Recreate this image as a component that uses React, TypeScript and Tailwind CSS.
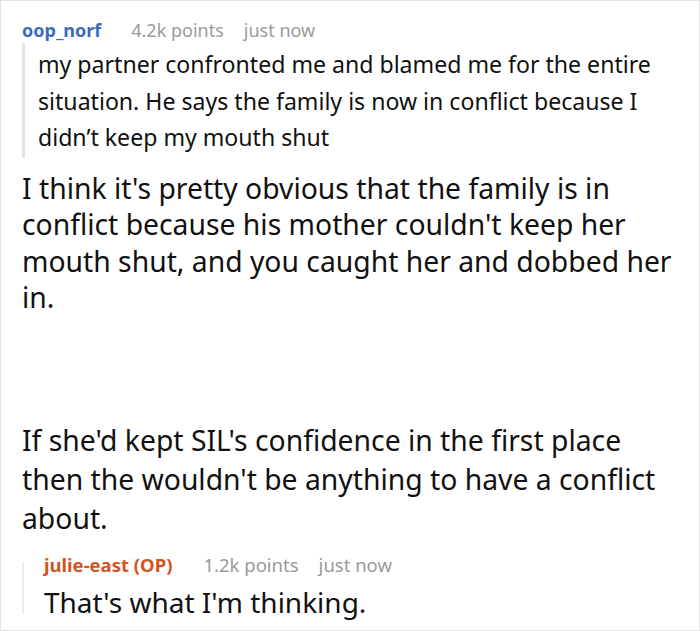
export default function App() {
  return (
    <div
      className="w-[700px] h-[631px] bg-white border border-[#e2e2e2] overflow-hidden text-[#111]"
      style={{ fontFamily: '"Noto Sans", sans-serif' }}
    >
      <div className="pl-[21px] pr-[19px] pt-[17px]">
        <div className="flex items-center text-[18px] leading-[24px]">
          <span className="font-bold text-[#3a6bbf]">oop_norf</span>
          <span className="ml-[30px] text-[#9a9a9a]">4.2k points</span>
          <span className="ml-[20px] text-[#9a9a9a]">just now</span>
        </div>

        <blockquote className="mt-[1px] border-l-[3px] border-[#e3e3e3] pl-[13px] pt-[3px] pb-[2px] text-[23.1px] leading-[36.5px]">
          my partner confronted me and blamed me for the entire situation. He says the family is now in conflict because I
          didn’t keep my mouth shut
        </blockquote>

        <p className="mt-[12px] text-[28.3px] leading-[36.5px]">
          I think it's pretty obvious that the family is in conflict because his mother couldn't keep her mouth shut, and
          you caught her and dobbed her in.
        </p>

        <p className="mt-[105px] text-[28.3px] leading-[39px]">
          If she'd kept SIL's confidence in the first place then the wouldn't be anything to have a conflict about.
        </p>

        <div className="mt-[15px] flex">
          <div className="mt-[10px] w-[2px] h-[50px] bg-[#ececec]" />
          <div className="ml-[20px]">
            <div className="flex items-center text-[18.5px] leading-[24px]">
              <span className="font-bold text-[#d4531e]">julie-east (OP)</span>
              <span className="ml-[31px] text-[#9a9a9a]">1.2k points</span>
              <span className="ml-[20px] text-[#9a9a9a]">just now</span>
            </div>
            <p className="mt-[7px] text-[28px] leading-[36px]">That's what I'm thinking.</p>
          </div>
        </div>
      </div>
    </div>
  );
}
